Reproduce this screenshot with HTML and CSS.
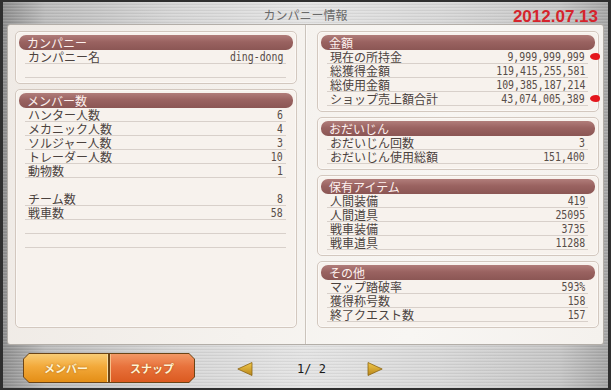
FILE: index.html
```html
<!DOCTYPE html>
<html lang="ja">
<head>
<meta charset="UTF-8">
<title>カンパニー情報</title>
<link rel="stylesheet" href="styles.css">
</head>
<body>

<div class="frame">
    <header class="topbar">
        <span></span>
        <h1 class="title">カンパニー情報</h1>
        <span class="date">2012.07.13</span>
    </header>

    <main class="panel">
        <div class="col col-left">
            <section class="box">
                <h2 class="box-head">カンパニー</h2>
                <div class="row"><span>カンパニー名</span><span class="val">ding-dong</span></div>
                <div class="row"></div>
            </section>
            <section class="box box-fill">
                <h2 class="box-head">メンバー数</h2>
                <div class="row"><span>ハンター人数</span><span class="val">6</span></div>
                <div class="row"><span>メカニック人数</span><span class="val">4</span></div>
                <div class="row"><span>ソルジャー人数</span><span class="val">3</span></div>
                <div class="row"><span>トレーダー人数</span><span class="val">10</span></div>
                <div class="row"><span>動物数</span><span class="val">1</span></div>
                <div class="row blank"></div>
                <div class="row"><span>チーム数</span><span class="val">8</span></div>
                <div class="row"><span>戦車数</span><span class="val">58</span></div>
                <div class="row"></div>
                <div class="row"></div>
            </section>
        </div>

        <div class="col col-right">
            <section class="box">
                <h2 class="box-head">金額</h2>
                <div class="row"><span>現在の所持金</span><span class="val">9,999,999,999</span><i class="mark"></i></div>
                <div class="row"><span>総獲得金額</span><span class="val">119,415,255,581</span></div>
                <div class="row"><span>総使用金額</span><span class="val">109,385,187,214</span></div>
                <div class="row"><span>ショップ売上額合計</span><span class="val">43,074,005,389</span><i class="mark"></i></div>
            </section>
            <section class="box">
                <h2 class="box-head">おだいじん</h2>
                <div class="row"><span>おだいじん回数</span><span class="val">3</span></div>
                <div class="row"><span>おだいじん使用総額</span><span class="val">151,400</span></div>
            </section>
            <section class="box">
                <h2 class="box-head">保有アイテム</h2>
                <div class="row"><span>人間装備</span><span class="val">419</span></div>
                <div class="row"><span>人間道具</span><span class="val">25095</span></div>
                <div class="row"><span>戦車装備</span><span class="val">3735</span></div>
                <div class="row"><span>戦車道具</span><span class="val">11288</span></div>
            </section>
            <section class="box">
                <h2 class="box-head">その他</h2>
                <div class="row"><span>マップ踏破率</span><span class="val">593%</span></div>
                <div class="row"><span>獲得称号数</span><span class="val">158</span></div>
                <div class="row"><span>終了クエスト数</span><span class="val">157</span></div>
            </section>
        </div>
    </main>

    <footer class="bottombar">
        <div class="tabs">
            <button class="tab tab-member"><span>メンバー</span></button>
            <button class="tab tab-snap"><span>スナップ</span></button>
        </div>
        <div class="pager">
            <svg class="arrow" width="16" height="14" viewBox="0 0 16 14">
                <defs>
                    <linearGradient id="gold" x1="0" y1="0" x2="0" y2="1">
                        <stop offset="0" stop-color="#f2c84a"/>
                        <stop offset="1" stop-color="#b8861a"/>
                    </linearGradient>
                </defs>
                <polygon points="15,0.5 15,13.5 0.8,7" fill="url(#gold)" stroke="#8c6412" stroke-width="0.8"/>
            </svg>
            <span class="page">1/ 2</span>
            <svg class="arrow" width="16" height="14" viewBox="0 0 16 14">
                <polygon points="1,0.5 1,13.5 15.2,7" fill="url(#gold)" stroke="#8c6412" stroke-width="0.8"/>
            </svg>
        </div>
    </footer>
</div>

</body>
</html>
```

FILE: styles.css
```css
body {
    margin: 0;
    background-color: #2e2e2e;
}
.frame {
    box-sizing: border-box;
    width: 611px;
    height: 390px;
    border-style: solid;
    border-color: #2f2f2f;
    border-width: 2px 3px;
    display: flex;
    flex-direction: column;
    font-family: "Noto Sans CJK JP", sans-serif;
    background:
        repeating-linear-gradient(180deg, rgba(255,255,255,0.12) 0 1px, rgba(0,0,0,0) 1px 2px, rgba(0,0,0,0.05) 2px 3px),
        linear-gradient(90deg, #8e8e8e 0%, #bcbcbc 7%, #d6d6d6 28%, #e4e4e4 50%, #d8d8d8 72%, #c6c6c6 92%, #a6a6a6 100%);
}
.topbar {
    height: 22px;
    display: grid;
    grid-template-columns: 1fr auto 1fr;
}
.title {
    margin: 0;
    padding-top: 2px;
    font-size: 12px;
    font-weight: normal;
    line-height: 22px;
    color: #6a6a6a;
}
.date {
    justify-self: end;
    margin: 6px 10px 0 0;
    font-family: "Liberation Sans", Arial, sans-serif;
    font-weight: bold;
    font-size: 17px;
    line-height: 17px;
    color: #d5242c;
}

.panel {
    box-sizing: border-box;
    height: 321px;
    margin: 0 4px;
    border: 1px solid #b3aea8;
    border-radius: 3px;
    display: grid;
    grid-template-columns: 298px 1fr;
    background: linear-gradient(100deg, #efeae5 0%, #f5f2ee 45%, #f8f6f3 70%, #f4f1ed 100%);
}
.col {
    display: flex;
    flex-direction: column;
    gap: 5px;
}
.col-left {
    padding: 6px 8px 16px 7px;
    border-right: 1px solid #cbc4bc;
}
.col-right {
    padding: 6px 4px 16px 10px;
    border-left: 1px solid #fbf9f7;
}
.box {
    border: 1px solid #d3c8bf;
    border-radius: 5px;
    padding: 3px 3px 5px;
    background-color: #f7f2ed;
    box-shadow: inset 0 0 0 1px #fbf8f5;
}
.box-fill {
    flex: 1;
}
.box-head {
    margin: 0;
    height: 15px;
    padding-left: 8px;
    border-radius: 7px;
    font-size: 12px;
    font-weight: normal;
    line-height: 15px;
    color: #fdf1ef;
    background: linear-gradient(#b17d7a, #9a6361 45%, #8b5654);
}
.row {
    position: relative;
    box-sizing: border-box;
    height: 14px;
    margin: 0 7px 0 6px;
    padding: 0 3px;
    display: flex;
    justify-content: space-between;
    align-items: flex-end;
    font-size: 12px;
    line-height: 13px;
    color: #4b423e;
    border-bottom: 1px solid #d8d0ca;
}
.row.blank {
    border-bottom-color: transparent;
}
.val {
    display: inline-block;
    font-family: "DejaVu Sans Mono", monospace;
    font-size: 13px;
    line-height: 13px;
    color: #574d48;
    transform: scaleX(0.76);
    transform-origin: right center;
}
.mark {
    position: absolute;
    right: -12px;
    top: 3px;
    width: 10px;
    height: 7px;
    border-radius: 6px 4px 4px 6px / 3.5px;
    background-color: #e4161c;
}

.bottombar {
    flex: 1;
    display: flex;
    align-items: flex-start;
    padding: 8px 0 0 20px;
}
.tabs {
    display: flex;
}
.tab {
    height: 30px;
    padding: 1px;
    border: 0;
    background-color: #6b4416;
    font-family: "Noto Sans CJK JP", sans-serif;
    font-size: 11px;
    font-weight: bold;
    color: #fff4d4;
    cursor: pointer;
}
.tab span {
    display: flex;
    align-items: center;
    justify-content: center;
    height: 100%;
    text-shadow: 0 0 2px rgba(120,60,0,0.6);
}
.tab-member {
    width: 86px;
    clip-path: polygon(6px 0, 100% 0, 100% 100%, 6px 100%, 0 calc(100% - 6px), 0 6px);
}
.tab-member span {
    background: linear-gradient(#f9cc75, #f2a93a 45%, #e48e16);
    box-shadow: inset -1px 0 0 #f7dca0;
    clip-path: polygon(5px 0, 100% 0, 100% 100%, 5px 100%, 0 calc(100% - 5px), 0 5px);
}
.tab-snap {
    width: 86px;
    clip-path: polygon(0 0, calc(100% - 6px) 0, 100% 6px, 100% calc(100% - 6px), calc(100% - 6px) 100%, 0 100%);
}
.tab-snap span {
    background: linear-gradient(#f29865, #e8723c 45%, #db5a20);
    box-shadow: inset 1px 0 0 #f6c08a;
    clip-path: polygon(0 0, calc(100% - 5px) 0, 100% 5px, 100% calc(100% - 5px), calc(100% - 5px) 100%, 0 100%);
}
.pager {
    height: 30px;
    margin-left: 42px;
    display: flex;
    align-items: center;
}
.arrow {
    margin-top: 2px;
}
.page {
    width: 30px;
    margin: 2px 40px 0 44px;
    font-family: "DejaVu Sans Mono", monospace;
    font-size: 12px;
    color: #1a1a1a;
    white-space: pre;
}
```
